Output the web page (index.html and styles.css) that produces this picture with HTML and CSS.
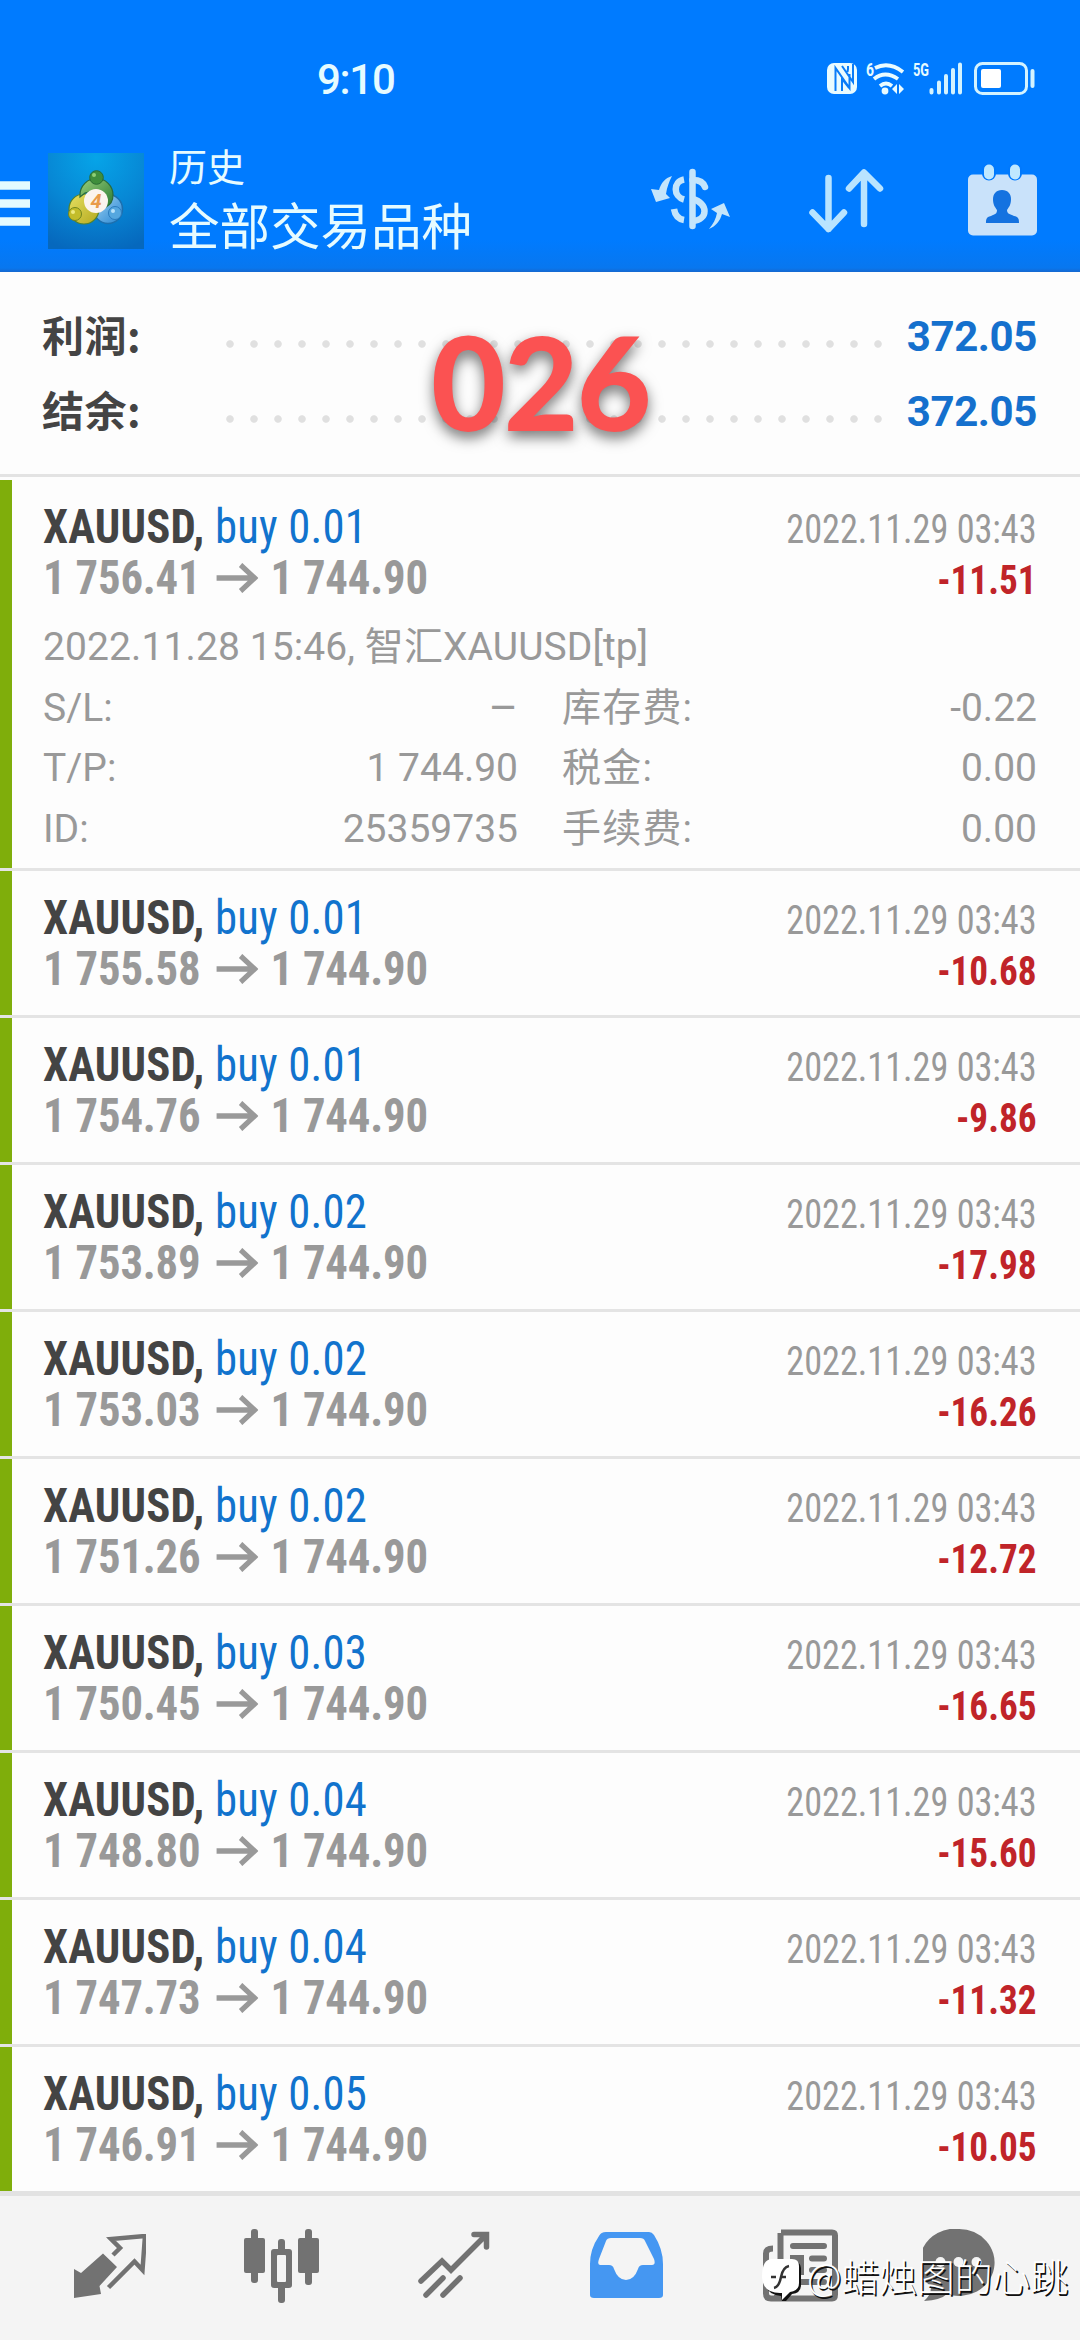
FILE: index.html
```
<!DOCTYPE html>
<html lang="zh-CN">
<head>
<meta charset="utf-8">
<title>历史</title>
<link rel="stylesheet" href="styles.css">
</head>
<body>
<header class="header">
  <div class="status">
    <time class="clock">9:10</time>
    <svg class="status-icons" width="212" height="44" viewBox="827 52 212 44">
      <rect x="827" y="63" width="30" height="31" rx="7" fill="#e9fbff"/>
      <path d="M835.500 91V68l14 20V74M848 66v3l-.5 3M842 66l11 16V64M842 91V79l7 9" fill="none" stroke="#0a7cf8" stroke-width="2"/>
      <text class="net" x="866" y="76" textLength="8" lengthAdjust="spacingAndGlyphs">6</text>
      <g fill="none" stroke="#e9fbff" stroke-width="3.8">
        <path d="M875 68q14-7 28 4M874 79q11-9 24 0M880 86q6-5 12 0"/>
      </g>
      <circle cx="885" cy="91" r="3.4" fill="#e9fbff"/>
      <path d="M892 89l5-5v10zM899 84l5 5-5 5z" fill="#e9fbff"/>
      <text class="net" x="913" y="76" textLength="16" lengthAdjust="spacingAndGlyphs">5G</text>
      <path d="M931.500 90v2.500M939 82.500v10M946 76v16.500M953 70v22.500M960 64.500v28" stroke="#d4f3ff" stroke-width="4" stroke-linecap="round"/>
      <rect x="975.500" y="63.500" width="51" height="30" rx="7" fill="none" stroke="#d4f3ff" stroke-width="3"/>
      <rect x="981" y="69" width="20" height="19" rx="2" fill="#fff"/>
      <path d="M1032.500 71v15" stroke="#d4f3ff" stroke-width="4" stroke-linecap="round"/>
    </svg>
  </div>
  <div class="bar">
    <svg class="menu" width="30" height="46" viewBox="0 0 30 46"><path d="M0 4.500h30M0 22.500h30M0 40.500h30" stroke="#e4fbff" stroke-width="8.500"/></svg>
    <svg class="logo" width="96" height="96" viewBox="0 0 96 96">
      <defs>
        <radialGradient id="bg" cx=".5" cy=".05" r="1"><stop offset="0" stop-color="#06a4e8"/><stop offset=".55" stop-color="#0786d4"/><stop offset="1" stop-color="#0668bd"/></radialGradient>
        <linearGradient id="gr" x1="0" y1="0" x2="1" y2="1"><stop offset="0" stop-color="#9bd07b"/><stop offset="1" stop-color="#287a33"/></linearGradient>
        <linearGradient id="ye" x1="0" y1="0" x2="1" y2="1"><stop offset="0" stop-color="#e5e063"/><stop offset="1" stop-color="#b5a91e"/></linearGradient>
        <linearGradient id="bl" x1="0" y1="0" x2="1" y2="1"><stop offset="0" stop-color="#a5d5f3"/><stop offset="1" stop-color="#2585d2"/></linearGradient>
      </defs>
      <rect width="96" height="96" fill="url(#bg)"/>
      <circle cx="60" cy="56" r="14.500" fill="url(#bl)" stroke="#1c6fae" stroke-width="1.500"/>
      <circle cx="36" cy="56" r="15" fill="url(#ye)" stroke="#55822a" stroke-width="1.200"/>
      <path d="M32 42a16.500 16.500 0 0 1 33 0c0 6-3 10-7 12l-6-10-7-6-8 2-5 4z" fill="url(#gr)" stroke="#2a6b3a" stroke-width="1.200"/>
      <circle cx="48.500" cy="24.500" r="6.800" fill="#3f8e3c" stroke="#286c33"/>
      <circle cx="46" cy="22" r="2" fill="#8fcf75"/>
      <circle cx="27" cy="61" r="6.500" fill="#c3bd2a" stroke="#71851e"/>
      <circle cx="25" cy="59" r="2" fill="#eeea80"/>
      <circle cx="67" cy="60" r="6.500" fill="#55a7df" stroke="#2a7bbd"/>
      <circle cx="65" cy="58" r="2" fill="#b9e2fa"/>
      <circle cx="48" cy="48" r="12" fill="#fbf4ee"/>
      <text x="48" y="55" text-anchor="middle" class="logo-digit">4</text>
    </svg>
    <div class="titles">
      <div class="title-small">历史</div>
      <div class="title-large">全部交易品种</div>
    </div>
    <svg class="act-currency" width="80" height="62" viewBox="651 168 80 62">
      <g fill="none" stroke="#c4e5fb" stroke-width="6.500">
        <path d="M684 179.500c-11 2-11 17 0 20M674 209c1 6 4 10 10 11"/>
        <path d="M692.500 180c6 0 11 2 12.500 7" stroke-linecap="round"/>
        <path d="M692.500 199c16 4 16 21 0 22"/>
        <path d="M692.500 172v54" stroke-linecap="round"/>
      </g>
      <path d="M672 176c-7 2-11 7-13 14l-8-1 5 13 14-4-4-4c1-7 3-12 6-18zM709 229c7-3 11-8 13-15l8 3-6-14-13 6 6 4c-1 6-4 11-8 16z" fill="#c4e5fb"/>
    </svg>
    <svg class="act-sort" width="76" height="66" viewBox="808 167 76 66">
      <path d="M828.500 178v51M812.500 212.500l16 16.500 15.500-16.500M864 224v-51M849 188.500l15-16 16 16" fill="none" stroke="#b9e4ff" stroke-width="6.500" stroke-linecap="round" stroke-linejoin="round"/>
    </svg>
    <svg class="act-calendar" width="69" height="72" viewBox="968 164 69 72">
      <rect x="968" y="174.500" width="69" height="61" rx="5" fill="#c9e2fa"/>
      <path d="M989 169.500v4M1015 169.500v4" stroke="#0079fd" stroke-width="14" stroke-linecap="round"/>
      <path d="M989 169.500v5M1015 169.500v5" stroke="#bfe8ff" stroke-width="10" stroke-linecap="round"/>
      <path d="M1002 190c-6 0-9 4-9 9 0 6 2 8 4 11 0 4-2 4-6 6-5 1-5 4-5 7h33c0-3 0-6-5-7-4-2-7-2-7-6 2-3 4-5 4-11 0-5-3-9-9-9z" fill="#1472e0"/>
    </svg>
  </div>
</header>

<section class="summary">
  <div class="sum-row"><span class="sum-label">利润:</span><span class="dots"></span><span class="sum-value">372.05</span></div>
  <div class="sum-row"><span class="sum-label">结余:</span><span class="dots"></span><span class="sum-value">372.05</span></div>
  <div class="stamp">026</div>
</section>

<main class="list" id="list">
  <article class="row first">
    <div class="deal">
      <div class="left"><div class="sym"><b>XAUUSD,</b> <span class="buy">buy 0.01</span></div><div class="price"><span>1 756.41</span><svg class="arrow" width="45" height="30" viewBox="0 0 45 30"><path d="M0 15h41M26 2l15 13-15 13"/></svg><span>1 744.90</span></div></div>
      <div class="right"><div class="date">2022.11.29 03:43</div><div class="profit">-11.51</div></div>
    </div>
    <div class="details">
      <div class="opened">2022.11.28 15:46, 智汇XAUUSD[tp]</div>
      <div class="pair"><span>S/L:</span><span class="dash">–</span></div><div class="pair"><span class="cn">库存费:</span><span>-0.22</span></div>
      <div class="pair"><span>T/P:</span><span>1 744.90</span></div><div class="pair"><span class="cn">税金:</span><span>0.00</span></div>
      <div class="pair"><span>ID:</span><span>25359735</span></div><div class="pair"><span class="cn">手续费:</span><span>0.00</span></div>
    </div>
  </article>
</main>

<nav class="tabs">
  <svg class="tab t1" width="73" height="66" viewBox="73 2234 73 66">
    <path d="M103 2253.500l14 13.500-17.500 19 1.500 8-27 4v-29l7 4z" fill="#727272"/>
    <path d="M113 2255l7-7-9-9 34-3-2.500 34-8-8.500-26 26" fill="none" stroke="#727272" stroke-width="4.500"/>
  </svg>
  <svg class="tab t2" width="75" height="75" viewBox="244 2229 75 75">
    <g fill="#727272"><rect x="244" y="2238" width="21" height="35" rx="2"/><rect x="298" y="2238" width="21" height="35" rx="2"/><rect x="251" y="2229" width="7" height="54" rx="3"/><rect x="305" y="2229" width="7" height="56" rx="3"/><rect x="278" y="2239" width="7" height="64" rx="3"/><rect x="271" y="2249" width="21" height="39" rx="3"/></g>
    <rect x="277" y="2255" width="9" height="27" rx="1" fill="#f4f4f4"/>
  </svg>
  <svg class="tab t3" width="73" height="68" viewBox="417 2231 73 68">
    <path d="M421 2281l21-20 9 9 35-35M474 2234.500h12.500V2247M426 2295l17-17M443 2295l17-17" fill="none" stroke="#727272" stroke-width="5.500" stroke-linecap="round"/>
  </svg>
  <svg class="tab t4" width="73" height="67" viewBox="590 2232 73 67">
    <path fill-rule="evenodd" fill="#4597f2" d="M606 2232h43q3 0 5 3 9 14 9 29v31q0 3-4 3h-65q-4 0-4-3v-31q0-15 9-28 2-4 7-4zM611 2238q-4 0-5 3l-7 18q-2 6 1 6h9q4 0 5 4 4 11 12 11t12-11q1-4 5-4h9q4 0 2-6l-9-18q-1-3-5-3z"/>
  </svg>
  <svg class="tab t5" width="75" height="73" viewBox="763 2229 75 73">
    <path d="M781 2232.500h51q3 0 3 3v59q0 4-3 4h-61q-5 0-5-5v-40q0-5 7-5M780.500 2233v57q0 7-6 8" fill="none" stroke="#727272" stroke-width="6"/>
    <path d="M793 2246h31M812 2258.500h12M812 2270h12M793 2282h31" stroke="#727272" stroke-width="6" stroke-linecap="round"/>
    <rect x="790" y="2255" width="14" height="20" fill="#727272"/>
  </svg>
  <svg class="tab t6" width="72" height="73" viewBox="922.500 2229 72 73">
    <path d="M958.500 2229a35.500 33.500 0 1 1-12 65q-6 6-23 7 7-6 7-14a35 33.500 0 0 1 28-58z" fill="#727272"/>
    <circle cx="940" cy="2262" r="5" fill="#f4f4f4"/><circle cx="958" cy="2262" r="5" fill="#f4f4f4"/><circle cx="976" cy="2262" r="5" fill="#f4f4f4"/>
  </svg>
  <div class="watermark">
    <svg width="40" height="44" viewBox="0 0 40 44">
      <path d="M10 3h22q6 0 7 7v17q0 8-9 9l-6 7-4 0-1-5Q3 37 2 20 2 3 10 3z" fill="#111"/>
      <path d="M10 1h20q7 0 7 7v17q0 8-9 9l-8 8v-7Q1 36 0 19 0 1 10 1z" fill="#fff"/>
      <path d="M12 30q5-1 7-11t8-11M9 19h5M18 19h6" fill="none" stroke="#333" stroke-width="2.500"/>
    </svg>
    <span>@蜡烛图的心跳</span>
  </div>
</nav>
<script src="deals.js"></script>
</body>
</html>
```

FILE: styles.css
```
* { box-sizing: border-box; }
body {
  margin: 0;
  width: 1080px;
  height: 2340px;
  overflow: hidden;
  display: flex;
  flex-direction: column;
  background: #fdfdfd;
  font-family: Roboto, "Noto Sans CJK SC", sans-serif;
}
svg { display: block; flex: none; }

.header {
  height: 272px;
  flex: none;
  background: linear-gradient(#007bff 0, #007bff 240px, #0877ef 268px, #1668cf 272px);
  color: #e6fbff;
}
.status {
  height: 136px;
  padding: 52px 41px 0 317px;
  display: flex;
  justify-content: space-between;
  align-items: flex-start;
}
.clock { margin-top: 8px; font-size: 42px; line-height: 40px; font-weight: 500; letter-spacing: -1.300px; }
.net { font-size: 19px; font-weight: 700; fill: #e6fbff; }
.bar { display: flex; align-items: flex-start; padding-top: 8px; }
.menu { margin-top: 37px; }
.logo { margin: 9px 25px 0 18px; }
.logo-digit { font-size: 20px; font-weight: 700; font-style: italic; fill: #e99b4a; }
.titles { width: 482px; flex: none; }
.title-small { font-size: 38px; line-height: 48px; }
.title-large { font-size: 50.500px; line-height: 60px; margin-top: 6px; }
.act-currency { margin-top: 24px; }
.act-sort { margin: 23px 0 0 77px; }
.act-calendar { margin: 20px 0 0 84px; }

.summary {
  position: relative;
  height: 205px;
  flex: none;
  padding: 26px 43px 0 42px;
  border-bottom: 3px solid #e3e3e3;
}
.sum-row { display: flex; height: 75px; line-height: 77px; }
.sum-label { width: 184px; font-size: 42px; line-height: 71px; letter-spacing: 0.500px; font-weight: 700; color: #444; font-family: "Noto Sans CJK SC", sans-serif; }
.dots {
  width: 656px;
  height: 8px;
  margin-top: 42px;
  background: radial-gradient(circle at 4px 4px, #e0e0e0 3.300px, transparent 4.200px) 0 0 / 24px 8px repeat-x;
}
.sum-value { margin-left: auto; font-size: 42px; letter-spacing: -0.400px; font-weight: 700; color: #1570cd; }
.stamp {
  position: absolute;
  left: 431px;
  top: 29px;
  font: 900 129px/160px Lato, sans-serif;
  letter-spacing: -2px;
  color: #fb5252;
  text-shadow: 0 6px 14px rgba(0,0,0,.55);
}

.list { flex: none; height: 1714px; }
.row {
  height: 147px;
  padding: 21px 43px 0 43px;
  border-bottom: 3px solid #e4e4e4;
  background: linear-gradient(#7fae0b, #7fae0b) left / 12px 100% no-repeat padding-box;
}
.row:last-child { border-bottom: 0; }
.row.first { height: 394px; padding-top: 24px; background-position: left 3px; }
.deal { display: flex; justify-content: space-between; }
.left { transform: scaleX(.932); transform-origin: left; }
.sym, .price {
  font-family: "Roboto Condensed", Roboto, sans-serif;
  font-stretch: 75%;
  font-size: 48px;
  line-height: 51px;
  white-space: nowrap;
}
.sym { color: #444; letter-spacing: 0.200px; }
.buy { color: #1173cd; }
.price { display: flex; align-items: center; color: #999; font-weight: 700; }
.price span { letter-spacing: -0.200px; }
.arrow { margin: 0 13px 0 17px; fill: none; stroke: #999; stroke-width: 5.500px; }
.right { text-align: right; padding-top: 3px; font-family: "Roboto Condensed", Roboto, sans-serif; font-stretch: 75%; }
.date { font-size: 40px; line-height: 51px; color: #999; transform: scaleX(.905); transform-origin: right; }
.profit { font-size: 40px; line-height: 52px; font-weight: 700; color: #c02429; transform: scaleX(.93); transform-origin: right; }
.details {
  display: grid;
  grid-template-columns: 475px 475px;
  column-gap: 44px;
  margin-top: 10px;
  font-size: 39px;
  line-height: 60.600px;
  color: #999;
}
.opened { grid-column: 1 / 3; letter-spacing: 0.100px; }
.pair { display: flex; justify-content: space-between; }
.cn { letter-spacing: 1.200px; }
.dash { font-size: 45px; }

.tabs {
  position: relative;
  flex: none;
  height: 149px;
  border-top: 5px solid #e2e2e2;
  background: #f4f4f4;
  display: flex;
  padding-left: 73px;
}
.tab { margin-top: 33px; }
.t1 { margin-top: 38px; }
.t2 { margin-left: 98px; }
.t3 { margin: 35px 0 0 98px; }
.t4 { margin: 36px 0 0 100px; }
.t5 { margin-left: 100px; }
.t6 { margin-left: 84.500px; }
.watermark {
  position: absolute;
  left: 762px;
  top: 62px;
  display: flex;
  align-items: center;
  gap: 5px;
  font: 300 37.800px/44px "Noto Sans CJK SC", sans-serif;
  color: #fff;
  text-shadow: 1.500px 1.500px 0.500px #111;
  white-space: nowrap;
}
.watermark span { margin-top: -10px; }
```

FILE: deals.js
```
const deals = [
  ["0.01", "1 755.58", "-10.68"],
  ["0.01", "1 754.76", "-9.86"],
  ["0.02", "1 753.89", "-17.98"],
  ["0.02", "1 753.03", "-16.26"],
  ["0.02", "1 751.26", "-12.72"],
  ["0.03", "1 750.45", "-16.65"],
  ["0.04", "1 748.80", "-15.60"],
  ["0.04", "1 747.73", "-11.32"],
  ["0.05", "1 746.91", "-10.05"]
];
const list = document.getElementById("list");
const first = list.querySelector(".deal");
for (const [volume, open, profit] of deals) {
  const row = document.createElement("article");
  row.className = "row";
  const deal = first.cloneNode(true);
  deal.querySelector(".buy").textContent = "buy " + volume;
  deal.querySelector(".price span").textContent = open;
  deal.querySelector(".profit").textContent = profit;
  row.append(deal);
  list.append(row);
}
```
